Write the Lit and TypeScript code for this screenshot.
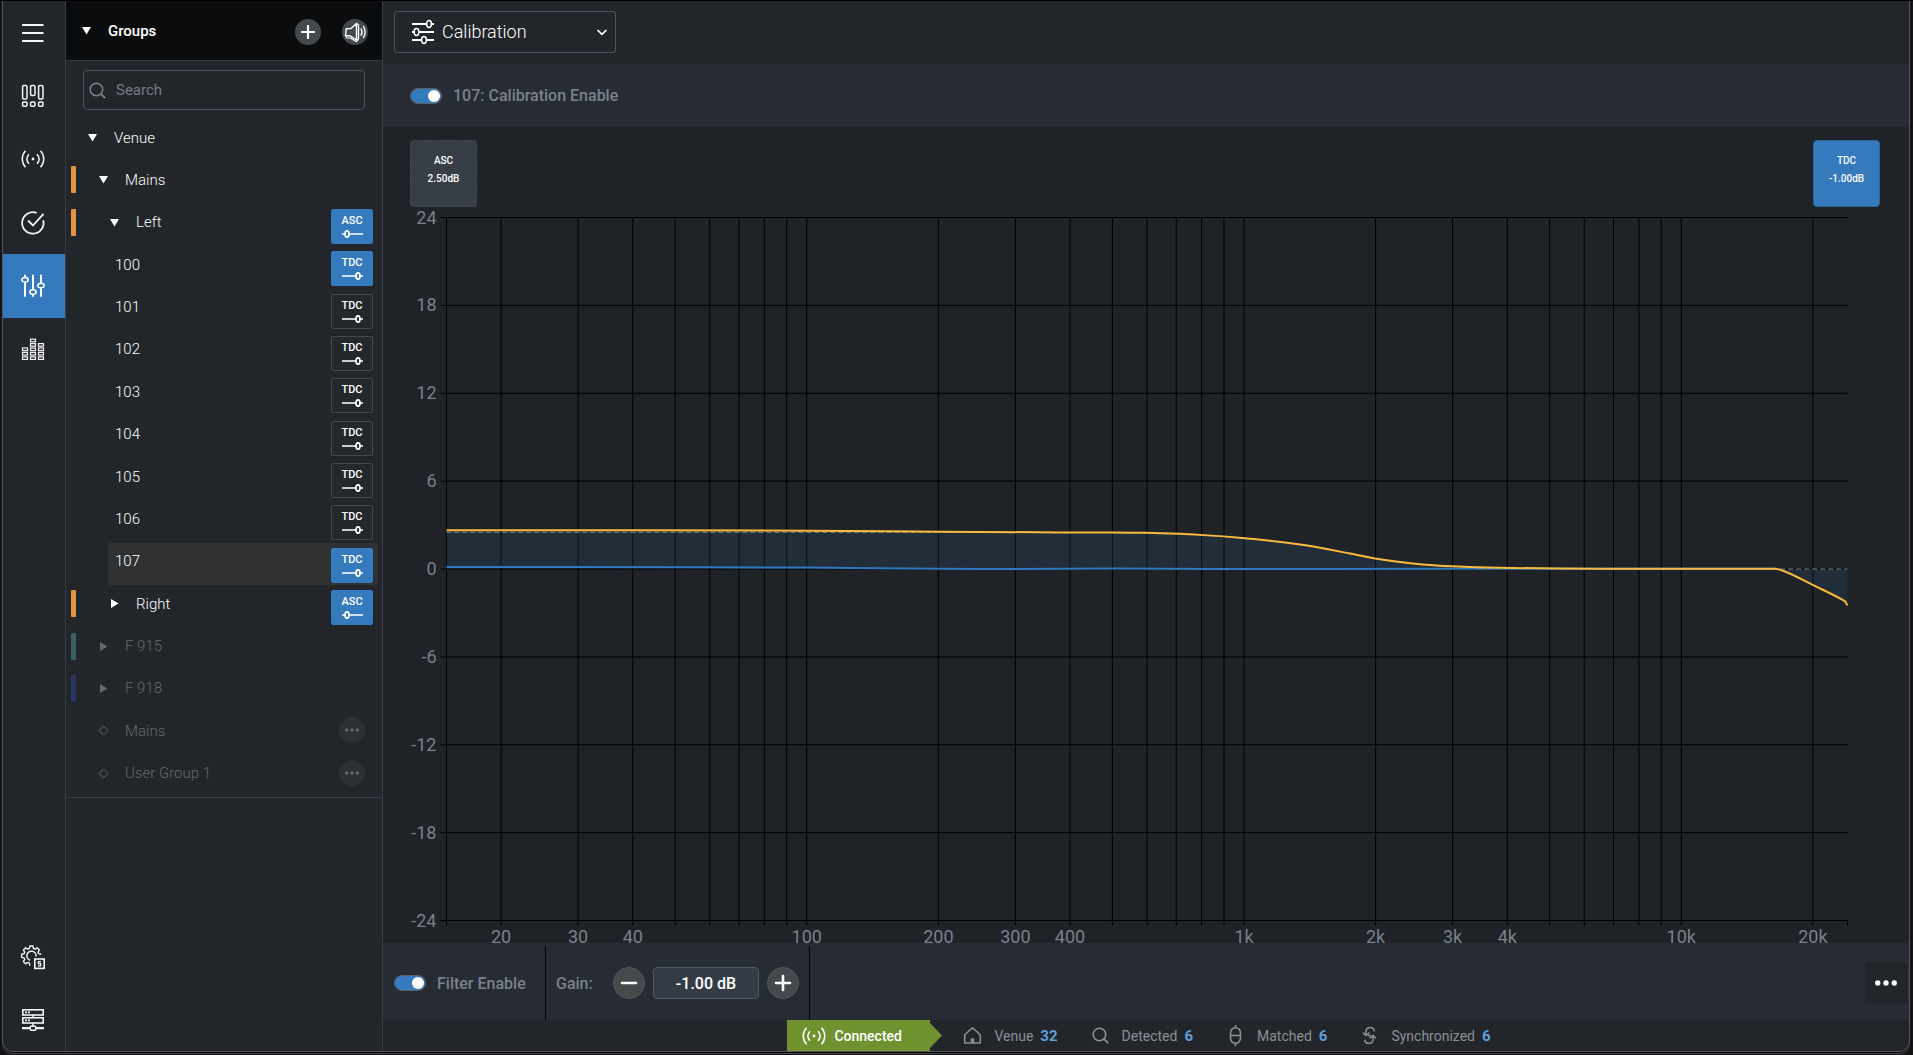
import { LitElement, html, svg, css, nothing } from "lit";
import { customElement, property, state } from "lit/decorators.js";
import { classMap } from "lit/directives/class-map.js";
import { styleMap } from "lit/directives/style-map.js";

/* ---------- icons ---------- */

function gearOutline(cx: number, cy: number, inner: number, outer: number, teeth: number) {
  const points: string[] = [];
  const step = 360 / teeth;
  const profile: [number, number][] = [
    [-0.36, inner],
    [-0.2, outer],
    [0.2, outer],
    [0.36, inner],
  ];
  // The lower right quarter stays open for the badge that overlaps the gear.
  for (let i = 0; i <= teeth; i++) {
    for (const [offset, r] of profile) {
      const deg = i * step + offset * step;
      if (deg < 84 || deg > 366) continue;
      const rad = (deg * Math.PI) / 180;
      points.push(`${(cx + r * Math.cos(rad)).toFixed(2)} ${(cy + r * Math.sin(rad)).toFixed(2)}`);
    }
  }
  return `M${points.join("L")}`;
}

const signalArcs = svg`
  <path d="M4.5 3.8C.2 8.5.2 15.5 4.5 20.2M8 7.2c-2.6 2.9-2.6 6.7 0 9.6M19.5 3.8c4.3 4.7 4.3 11.7 0 16.4M16 7.2c2.6 2.9 2.6 6.7 0 9.6" />
  <circle cx="12" cy="12" r="1.4" fill="currentColor" stroke="none" />`;

const meterColumns = [
  { x: 1.5, cells: 3 },
  { x: 9.5, cells: 5 },
  { x: 17.5, cells: 4 },
];

const icons: Record<string, unknown> = {
  menu: svg`<path d="M1 4h21.500M1 12h21.500M1 20h21.500" stroke-width="2" />`,
  mixer: svg`
    <rect x="1.600" y="1.600" width="4.400" height="13.400" rx="1.200" />
    <rect x="9.600" y="1.600" width="4.400" height="9.800" rx="1.200" />
    <rect x="17.600" y="1.600" width="4.400" height="13.400" rx="1.200" />
    <rect x="1.600" y="18" width="4.400" height="4.200" rx="1" />
    <rect x="9.600" y="18" width="4.400" height="4.200" rx="1" />
    <rect x="17.600" y="18" width="4.400" height="4.200" rx="1" />`,
  signal: signalArcs,
  check: svg`<path d="M15.600 1.900A10.700 10.700 0 1 0 22.200 9.200" stroke-width="1.800" /><path d="M7 9.500l5 5L22.500 2.800" stroke-width="1.800" />`,
  sliders: svg`
    <path d="M4 .8v2.400M4 8.500v14.300M12 .8v14.700M12 20.500v2.300M20 .8v8.200M20 14v8.800" stroke-width="2" />
    <ellipse cx="4" cy="5.800" rx="3.200" ry="2.300" />
    <ellipse cx="12" cy="18" rx="3.200" ry="2.300" />
    <ellipse cx="20" cy="11.500" rx="3.200" ry="2.300" />`,
  meters: svg`${meterColumns.map(({ x, cells }) =>
    Array.from(
      { length: cells },
      (_, i) => svg`<rect x=${x} y=${19.8 - i * 4.4} width="5" height="2.600" stroke-width="1.200" />`,
    ),
  )}`,
  gear: svg`
    <path d=${gearOutline(10.4, 10.8, 7.6, 9.9, 8)} stroke-width="1.400" stroke-linejoin="round" />
    <path d="M9 15.200A4.600 4.600 0 1 1 15 11.500" />
    <rect x="13.800" y="14" width="9.400" height="9.400" stroke-width="1.600" />
    <path d="M20 16.600h-2.600v2h2.200v2.200h-2.600" stroke-width="1.300" />`,
  servers: svg`
    <rect x="1.800" y="1.800" width="20.400" height="5.200" stroke-width="1.600" />
    <rect x="1.800" y="9.800" width="20.400" height="5.200" stroke-width="1.600" />
    <path d="M4 4.400h2M7 4.400h2M4 12.400h2M7 12.400h2" stroke-width="1.600" />
    <path d="M12 7v2.800M12 15v3" />
    <path d="M1 20.200h8M15 20.200h8" stroke-width="2.200" />
    <rect x="9.200" y="18.200" width="5.600" height="4" rx="1" />`,
  plus: svg`<path d="M12 6v12M6 12h12" stroke-width="2.200" stroke-linecap="round" />`,
  minus: svg`<path d="M5 12h14" stroke-width="2.600" stroke-linecap="round" />`,
  plusLarge: svg`<path d="M12 5v14M5 12h14" stroke-width="2.600" stroke-linecap="round" />`,
  speaker: svg`
    <path d="M3.200 8.800L2.500 15.500l4.500 .3L13.500 20V3.500L8 8.500z" stroke-linejoin="round" stroke-width="1.400" />
    <path d="M2.500 15.500l1.500 2.500h3.500l6 3.700" stroke-width="1.200" />
    <path d="M13.500 3.500L15.500 5v13.500L13.500 21.700M18 8.500c1.200 2.300 1.200 5 0 7.200M20.300 6c2.200 3.700 2.200 8.300 0 12" stroke-width="1.400" />`,
  search: svg`<circle cx="10.500" cy="10.500" r="8.800" stroke-width="2.200" /><path d="M16.800 16.800l6 6" stroke-width="2.600" />`,
  calibration: svg`
    <path d="M1 4h14.500M20.500 4H23M1 12h2M8 12h15M1 20h9.500M15.500 20H23" stroke-width="1.900" />
    <ellipse cx="18" cy="4" rx="2.400" ry="3.400" />
    <ellipse cx="5.500" cy="12" rx="2.400" ry="3.400" />
    <ellipse cx="13" cy="20" rx="2.400" ry="3.400" />`,
  chevron: svg`<path d="M3 8l9 8.500L21 8" stroke-width="3.400" />`,
  home: svg`<path d="M1 11L12 1l11 10v11.500H1z" stroke-width="2.200" stroke-linejoin="round" /><path d="M12 16v6" stroke-width="5" />`,
  matched: svg`<rect x="5" y="1" width="14" height="22" rx="7" stroke-width="2.200" /><path d="M5 12h14M12-3v4M12 23v4" stroke-width="2.200" />`,
  sync: svg`
    <path d="M19 6C18.300 2.500 16 .8 13 .8 9.200 .8 7 3.500 7 7v4.500M2.800 8L7 12l5-4" stroke-width="2.200" />
    <path d="M5 18c.7 3.500 3 5.200 6 5.200 3.800 0 6-2.700 6-6.200v-4.500M12 16l5-4 4.200 4M9.500 12H14" stroke-width="2.200" />`,
  more: svg`<g fill="currentColor" stroke="none"><circle cx="3" cy="12" r="2.900" /><circle cx="12" cy="12" r="2.900" /><circle cx="21" cy="12" r="2.900" /></g>`,
};

@customElement("ui-icon")
export class UiIcon extends LitElement {
  @property() name = "";
  static styles = css`
    :host { display: inline-flex; flex: none; width: 24px; height: 24px; }
    .glyph { flex: 1; fill: none; stroke: currentColor; stroke-width: 1.5; overflow: visible; }
  `;
  render() {
    return html`<svg class="glyph" viewBox="0 0 24 24" aria-hidden="true">${icons[this.name] ?? nothing}</svg>`;
  }
}

/* ---------- group tree ---------- */

type TreeRow = {
  label: string;
  level: number;
  kind: "open" | "closed" | "leaf" | "user";
  swatch?: string;
  tag?: "ASC" | "TDC";
  tagActive?: boolean;
  dim?: boolean;
};

const ORANGE = "#e3943f";

const rows: TreeRow[] = [
  { label: "Venue", level: 0, kind: "open" },
  { label: "Mains", level: 1, kind: "open", swatch: ORANGE },
  { label: "Left", level: 2, kind: "open", swatch: ORANGE, tag: "ASC", tagActive: true },
  ...["100", "101", "102", "103", "104", "105", "106", "107"].map(
    (label): TreeRow => ({
      label,
      level: 3,
      kind: "leaf",
      tag: "TDC",
      tagActive: label === "100" || label === "107",
    }),
  ),
  { label: "Right", level: 2, kind: "closed", swatch: ORANGE, tag: "ASC", tagActive: true },
  { label: "F 915", level: 1, kind: "closed", swatch: "#3d5f60", dim: true },
  { label: "F 918", level: 1, kind: "closed", swatch: "#2a3465", dim: true },
  { label: "Mains", level: 1, kind: "user", dim: true },
  { label: "User Group 1", level: 1, kind: "user", dim: true },
];

@customElement("group-panel")
export class GroupPanel extends LitElement {
  @state() private selected = "107";

  static styles = css`
    :host {
      display: flex;
      flex-direction: column;
      flex: none;
      width: 316px;
      border-right: 1px solid #363d46;
      font-size: 15px;
    }
    button { font: inherit; color: inherit; background: none; border: 0; padding: 0; cursor: pointer; }
    .head {
      display: flex;
      align-items: center;
      height: 59px;
      padding: 0 14px 0 16px;
      background: #0b0c0e;
      border-bottom: 1px solid #363d46;
    }
    .title { flex: 1; display: flex; align-items: center; height: 59px; font-weight: 500; text-align: left; }
    .round {
      display: flex;
      align-items: center;
      justify-content: center;
      width: 26px;
      height: 26px;
      margin-top: 2px;
      margin-left: 21px;
      border-radius: 50%;
      background: #45494c;
    }
    .search {
      display: flex;
      align-items: center;
      gap: 10px;
      height: 38px;
      margin: 9px 17px 9px;
      padding: 0 5px;
      border: 1px solid #485462;
      border-radius: 4px;
      color: #7b838d;
    }
    .search ui-icon { width: 17px; height: 17px; }
    .query { flex: 1; min-width: 0; font: inherit; color: #fff; background: none; border: 0; outline: 0; padding: 0; }
    .query::placeholder { color: #747c86; opacity: 1; }
    .tree {
      display: grid;
      grid-auto-rows: 1fr;
      min-height: 678px;
      margin: 0;
      padding: 0;
      list-style: none;
      border-bottom: 1px solid #363d46;
    }
    .row { display: flex; align-items: flex-start; padding: 5px 9px 0 5px; }
    .row.leaf { margin: 0 4px 0 42px; padding: 5px 5px 0 7px; }
    .row.selected { background: #303132; }
    .swatch { width: 5px; height: 27px; border-radius: 1px; }
    .entry { flex: 1; display: flex; align-items: center; height: 27px; text-align: left; color: #fff; font-weight: 300; }
    .level0 { padding-left: 12px; }
    .level1 { padding-left: 23px; }
    .level2 { padding-left: 34px; }
    .dim { color: #66696c; }
    .marker { flex: none; width: 9px; height: 9px; margin-right: 17px; fill: currentColor; }
    .diamond { fill: none; stroke: currentColor; overflow: visible; }
    .tag {
      display: flex;
      flex-direction: column;
      align-items: center;
      justify-content: center;
      gap: 3px;
      box-sizing: border-box;
      width: 42px;
      height: 35px;
      border: 1px solid #45494d;
      border-radius: 2px;
      background: #24282d;
      color: #fff;
      font-size: 11px;
      line-height: 12px;
      font-weight: 500;
    }
    .tag.active { background: #347abd; border-color: #347abd; }
    .slide { width: 21px; height: 8px; fill: none; stroke: #fff; stroke-width: 1.7; }
    .options { margin: 0 8px 0 0; background: #2c2f33; color: #66696c; }
    .options ui-icon { width: 14px; height: 14px; }
  `;

  private marker(kind: TreeRow["kind"]) {
    if (kind === "leaf") return nothing;
    if (kind === "user")
      return html`<svg class="marker diamond" viewBox="0 0 9 9"><path d="M4.500 0L9 4.500 4.500 9 0 4.500z" /></svg>`;
    const shape = kind === "open" ? "M0 1h9L4.500 8.500z" : "M1 0l7.500 4.500L1 9z";
    return html`<svg class="marker" viewBox="0 0 9 9"><path d=${shape} /></svg>`;
  }

  private row(row: TreeRow) {
    const leaf = row.kind === "leaf";
    const selected = leaf && row.label === this.selected;
    const knob = row.tag === "ASC" ? 5 : 16;
    return html`
      <li class=${classMap({ row: true, leaf, selected })}>
        ${leaf ? nothing : html`<span class="swatch" style=${styleMap({ background: row.swatch ?? "transparent" })}></span>`}
        <button
          class=${classMap({ entry: true, [`level${row.level}`]: !leaf, dim: !!row.dim })}
          @click=${() => leaf && (this.selected = row.label)}
        >
          ${this.marker(row.kind)}<span>${row.label}</span>
        </button>
        ${row.tag
          ? html`<button class=${classMap({ tag: true, active: !!row.tagActive })}>
              ${row.tag}
              <svg class="slide" viewBox="0 0 21 8" aria-hidden="true">
                <path d=${`M0 4h${knob - 2}M${knob + 2} 4H21`} />
                <ellipse cx=${knob} cy="4" rx="2" ry="3.200" />
              </svg>
            </button>`
          : nothing}
        ${row.kind === "user"
          ? html`<button class="round options" aria-label="Group options"><ui-icon name="more"></ui-icon></button>`
          : nothing}
      </li>
    `;
  }

  render() {
    return html`
      <div class="head">
        <button class="title">${this.marker("open")}<span>Groups</span></button>
        <button class="round" aria-label="Add group"><ui-icon name="plus"></ui-icon></button>
        <button class="round" aria-label="Mute groups"><ui-icon name="speaker"></ui-icon></button>
      </div>
      <label class="search">
        <ui-icon name="search"></ui-icon>
        <input class="query" type="text" placeholder="Search" aria-label="Search" />
      </label>
      <ul class="tree">${rows.map((r) => this.row(r))}</ul>
    `;
  }
}

/* ---------- response chart ---------- */

type Sample = [frequency: number, decibel: number];

const F_MIN = 15;
const F_MAX = 24000;
const DB_MAX = 24;

const xAt = (f: number) => (Math.log(f / F_MIN) / Math.log(F_MAX / F_MIN)) * 1000;
const yAt = (db: number) => ((DB_MAX - db) / (2 * DB_MAX)) * 1000;

const measured: Sample[] = [
  [15, 2.64], [40, 2.64], [100, 2.62], [203, 2.55], [381, 2.5], [497, 2.5], [594, 2.47],
  [714, 2.4], [793, 2.33], [1006, 2.1], [1343, 1.67], [1748, 1.06], [1994, 0.72],
  [2400, 0.4], [2992, 0.18], [3855, 0.08], [5288, 0.03], [8000, 0.02], [12000, 0.02],
  [15600, 0.02], [16400, 0.02], [17015, -0.1], [19920, -1.07], [23300, -2.08], [23700, -2.22], [24000, -2.5],
];
const target: Sample[] = [
  [15, 2.5], [381, 2.5], [497, 2.5], [594, 2.47], [714, 2.4], [1006, 2.1], [1343, 1.67],
  [1748, 1.06], [1994, 0.72], [2992, 0.18], [5288, 0], [24000, 0],
];
const device: Sample[] = [
  [15, 0.14], [60, 0.12], [100, 0.1], [203, 0.02], [300, 0], [500, 0.04], [900, 0], [1500, 0], [3000, 0.02], [16400, 0.02],
];

function curve(samples: Sample[]) {
  const p = samples.map(([f, db]) => [xAt(f), yAt(db)]);
  let d = `M${p[0][0].toFixed(2)} ${p[0][1].toFixed(2)}`;
  // Monotone tangents keep the flat stretches flat.
  const slope = (i: number) => (p[i + 1][1] - p[i][1]) / (p[i + 1][0] - p[i][0]);
  const tangent = (i: number) => {
    if (i === 0) return slope(0);
    if (i === p.length - 1) return slope(i - 1);
    const a = slope(i - 1);
    const b = slope(i);
    return a * b <= 0 ? 0 : (2 * a * b) / (a + b);
  };
  for (let i = 0; i < p.length - 1; i++) {
    const h = (p[i + 1][0] - p[i][0]) / 3;
    d += `C${(p[i][0] + h).toFixed(2)} ${(p[i][1] + tangent(i) * h).toFixed(2)} ${(p[i + 1][0] - h).toFixed(2)} ${(
      p[i + 1][1] - tangent(i + 1) * h
    ).toFixed(2)} ${p[i + 1][0].toFixed(2)} ${p[i + 1][1].toFixed(2)}`;
  }
  return d;
}

const gridFrequencies = [15];
for (const decade of [10, 100, 1000, 10000])
  for (let n = 1; n < 10; n++) {
    const f = decade * n;
    if (f >= 20 && f <= 20000) gridFrequencies.push(f);
  }

const labelled = [20, 30, 40, 100, 200, 300, 400, 1000, 2000, 3000, 4000, 10000, 20000];
const levels = [24, 18, 12, 6, 0, -6, -12, -18, -24];

@customElement("response-chart")
export class ResponseChart extends LitElement {
  static styles = css`
    :host { display: flex; flex: 1; padding: 10px 62px 23px 63px; }
    .plot { flex: 1; min-width: 0; overflow: visible; }
    .grid { stroke: #000; stroke-width: 1; }
    .label { fill: #79818c; font-size: 18px; }
    .end { text-anchor: end; }
    .mid { text-anchor: middle; }
    .curves { overflow: visible; fill: none; }
    .curves path { vector-effect: non-scaling-stroke; }
    .area { fill: #3380bc; fill-opacity: 0.12; }
    .target { stroke: #7d8288; stroke-width: 1; stroke-dasharray: 5 3; }
    .device { stroke: #2f78bf; stroke-width: 2; }
    .measured { stroke: #f8b93c; stroke-width: 2; stroke-linejoin: round; }
  `;

  render() {
    const measuredPath = curve(measured);
    const zero = yAt(0);
    // The half-pixel shift centres the hairlines on the pixel grid.
    return html`
      <svg class="plot" role="img" aria-label="Frequency response">
        <g transform="translate(.5 .5)">
          ${levels.map((db) => {
            const y = `${yAt(db) / 10}%`;
            return svg`
              <line class="grid" x1="-6" x2="100%" y1=${y} y2=${y} />
              <text class="label end" x="-10" y=${y} dy="6">${db}</text>`;
          })}
          ${gridFrequencies.map((f) => {
            const x = `${xAt(f) / 10}%`;
            return svg`
              <line class="grid" x1=${x} x2=${x} y1="0" y2="100%" />
              <svg x=${x} y="100%" overflow="visible"><line class="grid" x1="0" x2="0" y1="0" y2="5" /></svg>`;
          })}
          <svg x="100%" y="100%" overflow="visible"><line class="grid" x1="0" x2="0" y1="0" y2="5" /></svg>
          ${labelled.map(
            (f) => svg`<text class="label mid" x=${`${xAt(f) / 10}%`} y="100%" dy="22">${f >= 1000 ? `${f / 1000}k` : f}</text>`,
          )}
          <svg class="curves" viewBox="0 0 1000 1000" preserveAspectRatio="none">
            <path class="area" d=${`${measuredPath}V${zero}H0Z`} />
            <path class="target" d=${curve(target)} />
            <path class="device" d=${curve(device)} />
            <path class="measured" d=${measuredPath} />
          </svg>
        </g>
      </svg>
    `;
  }
}

/* ---------- application shell ---------- */

const railTop = [
  ["menu", "Menu"],
  ["mixer", "Overview"],
  ["signal", "Network"],
  ["check", "Checks"],
  ["sliders", "Tuning"],
  ["meters", "Metering"],
];
const railBottom = [
  ["gear", "Settings"],
  ["servers", "Devices"],
];
const counters = [
  { icon: "home", label: "Venue", count: 32 },
  { icon: "search", label: "Detected", count: 6 },
  { icon: "matched", label: "Matched", count: 6 },
  { icon: "sync", label: "Synchronized", count: 6 },
];

@customElement("app-root")
export class AppRoot extends LitElement {
  @state() private section = "sliders";
  @state() private gain = -1;

  static styles = css`
    :host {
      display: flex;
      box-sizing: border-box;
      min-height: 100vh;
      padding: 1px 3px 3px 2px;
      background: #141416;
      box-shadow: inset 0 1px #000;
      color: #fff;
      font-family: Roboto, "Noto Sans", sans-serif;
      font-size: 16px;
    }
    button { font: inherit; color: inherit; background: none; border: 0; padding: 0; cursor: pointer; }
    .window {
      flex: 1;
      min-width: 0;
      display: flex;
      overflow: hidden;
      background: #222529;
      border: solid #55575a;
      border-width: 0 1px 1px;
      border-radius: 0 0 10px 10px;
      box-shadow: 0 1px #000, 0 2px #4b4a4d;
    }
    .rail { display: flex; flex-direction: column; justify-content: space-between; flex: none; width: 62px; border-right: 1px solid #363d46; }
    .rail-group { display: grid; grid-auto-rows: 1fr; }
    .rail-main { min-height: 380px; }
    .rail-foot { min-height: 126px; }
    .rail-item { display: flex; align-items: center; justify-content: center; padding-right: 2px; color: #f4f4f4; }
    .rail-item.active { background: #347abd; color: #fff; }
    .main { flex: 1; min-width: 0; display: flex; flex-direction: column; }
    .toolbar { display: flex; align-items: center; padding: 10px 11px 11px; }
    .picker { display: grid; grid-template-columns: 48px 1fr 28px; align-items: center; justify-items: center; width: 222px; }
    .picker ui-icon { grid-row: 1; pointer-events: none; }
    .picker .lead { grid-column: 1; width: 20px; height: 24px; margin-left: 5px; }
    .picker .tail { grid-column: 3; width: 12px; height: 12px; }
    .mode {
      grid-area: 1 / 1 / 2 / 4;
      box-sizing: border-box;
      width: 100%;
      height: 42px;
      padding: 0 36px 2px 47px;
      appearance: none;
      background: #222529;
      border: 1px solid #485462;
      border-radius: 3px;
      color: #fff;
      font: inherit;
      font-size: 18px;
      font-weight: 300;
    }
    .enable { display: flex; align-items: center; height: 63px; padding: 0 27px; background: #272b33; }
    .switch { display: flex; align-items: center; gap: 11px; color: #79818c; font-weight: 500; }
    .toggle {
      appearance: none;
      display: flex;
      justify-content: flex-start;
      align-items: center;
      box-sizing: border-box;
      width: 32px;
      height: 16px;
      margin: 0;
      padding: 0 1px;
      border: 1px solid #5d6064;
      border-radius: 8px;
      background: #45494c;
    }
    .toggle:checked { justify-content: flex-end; background: #347abd; }
    .toggle::before { content: ""; width: 12px; height: 12px; border-radius: 50%; background: #fff; }
    .response { flex: 1; display: flex; flex-direction: column; background: #1f2226; }
    .tiles { display: flex; justify-content: space-between; padding: 13px 29px 0 27px; }
    .tile {
      display: flex;
      flex-direction: column;
      align-items: center;
      box-sizing: border-box;
      width: 67px;
      height: 67px;
      padding-top: 11px;
      border: 1px dashed #414950;
      border-radius: 4px;
      background: #383e46;
      font-size: 10px;
      line-height: 18px;
      font-weight: 500;
    }
    .tile.active { background: #347abd; border: 1px solid #2f6596; }
    .filter { display: flex; align-items: stretch; height: 77px; background: #272b33; }
    .cell { display: flex; align-items: center; margin-top: 3px; padding: 0 10px 0 11px; border-right: 1px solid #000; }
    .cell-enable { width: 141px; }
    .cell-gain { gap: 8px; padding: 0 10px; color: #79818c; font-weight: 500; }
    .caption { width: 49px; }
    .step {
      display: flex;
      align-items: center;
      justify-content: center;
      box-sizing: border-box;
      width: 32px;
      height: 32px;
      border: 1px solid #4c5661;
      border-radius: 50%;
      background: #45494c;
      color: #fff;
    }
    .value {
      box-sizing: border-box;
      width: 106px;
      height: 32px;
      padding: 0;
      border: 1px solid #4c5a69;
      border-radius: 4px;
      background: #353c45;
      color: #fff;
      font: inherit;
      text-align: center;
    }
    .more { display: flex; align-items: center; justify-content: center; align-self: center; width: 42px; height: 42px; margin: 3px 2px 0 auto; border-radius: 4px; background: #222529; }
    .more ui-icon { width: 22px; height: 22px; }
    .status { display: flex; justify-content: center; height: 31px; padding-right: 14px; font-size: 14px; color: #8b9097; }
    .connected { display: flex; align-items: center; gap: 8px; box-sizing: border-box; width: 143px; padding-left: 15px; background: #6f9130; color: #fff; font-weight: 500; }
    .tip { width: 12px; fill: #6f9130; }
    .counters { display: flex; gap: 34px; margin: 0; padding: 0 0 0 22px; list-style: none; }
    .counter { display: flex; align-items: center; gap: 7px; }
    .counter ui-icon { width: 17px; height: 17px; margin-right: 6px; }
    .count { color: #5f9fd8; font-size: 15px; font-weight: 700; }
  `;

  private rail(items: string[][]) {
    return items.map(
      ([icon, label]) => html`
        <button
          class=${classMap({ "rail-item": true, active: icon === this.section })}
          aria-label=${label}
          @click=${() => (this.section = icon)}
        >
          <ui-icon name=${icon}></ui-icon>
        </button>
      `,
    );
  }

  render() {
    return html`
      <div class="window">
        <nav class="rail">
          <div class="rail-group rail-main">${this.rail(railTop)}</div>
          <div class="rail-group rail-foot">${this.rail(railBottom)}</div>
        </nav>
        <group-panel></group-panel>
        <main class="main">
          <header class="toolbar">
            <div class="picker">
              <select class="mode" aria-label="View">
                <option>Calibration</option>
              </select>
              <ui-icon class="lead" name="calibration"></ui-icon>
              <ui-icon class="tail" name="chevron"></ui-icon>
            </div>
          </header>
          <div class="enable">
            <label class="switch"><input class="toggle" type="checkbox" checked />107: Calibration Enable</label>
          </div>
          <section class="response">
            <div class="tiles">
              <button class="tile"><span>ASC</span><span>2.50dB</span></button>
              <button class="tile active"><span>TDC</span><span>${this.gain.toFixed(2)}dB</span></button>
            </div>
            <response-chart></response-chart>
          </section>
          <div class="filter">
            <div class="cell cell-enable">
              <label class="switch"><input class="toggle" type="checkbox" checked />Filter Enable</label>
            </div>
            <div class="cell cell-gain">
              <label class="caption" for="gain">Gain:</label>
              <button class="step" aria-label="Decrease gain" @click=${() => (this.gain -= 0.5)}><ui-icon name="minus"></ui-icon></button>
              <input class="value" id="gain" type="text" .value=${`${this.gain.toFixed(2)} dB`} />
              <button class="step" aria-label="Increase gain" @click=${() => (this.gain += 0.5)}><ui-icon name="plusLarge"></ui-icon></button>
            </div>
            <button class="more" aria-label="More options"><ui-icon name="more"></ui-icon></button>
          </div>
          <footer class="status">
            <div class="connected"><ui-icon name="signal"></ui-icon>Connected</div>
            <svg class="tip" viewBox="0 0 12 32" preserveAspectRatio="none" aria-hidden="true"><path d="M0 3l12 13L0 29z" /></svg>
            <ul class="counters">
              ${counters.map(
                (c) => html`<li class="counter"><ui-icon name=${c.icon}></ui-icon><span>${c.label}</span><span class="count">${c.count}</span></li>`,
              )}
            </ul>
          </footer>
        </main>
      </div>
    `;
  }
}
